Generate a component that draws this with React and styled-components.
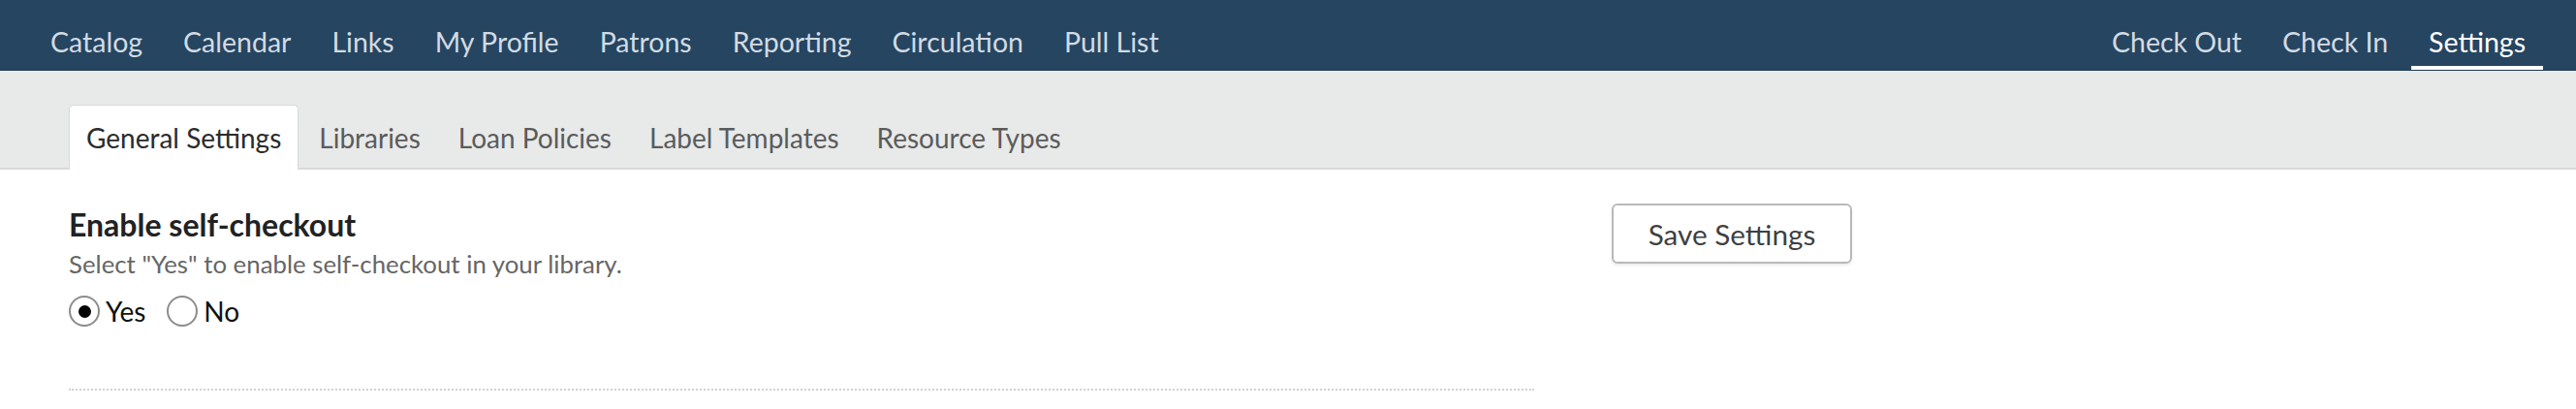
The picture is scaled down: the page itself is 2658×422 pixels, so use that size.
import React, { useState } from "react";
import styled, { createGlobalStyle } from "styled-components";

const GlobalStyle = createGlobalStyle`
	body {
		margin: 0;
		background: #fff;
		font-family: Lato, "Open Sans", sans-serif;
	}
`;

const NavBar = styled.nav`
	display: flex;
	justify-content: space-between;
	height: 72px;
	padding: 0 31px;
	background: #254561;
	border-bottom: 1px solid #1e3a53;
`;

const NavGroup = styled.div`
	display: flex;
`;

const NavItem = styled.a`
	display: flex;
	align-items: center;
	margin: 0 3px;
	padding: 17px 18px 0;
	font-size: 28.5px;
	color: ${(props) => (props.active ? "#fff" : "#d3dbe3")};
	border-bottom: 4px solid ${(props) => (props.active ? "#fff" : "transparent")};
	text-decoration: none;
	white-space: nowrap;
	cursor: pointer;
`;

const TabBar = styled.div`
	display: flex;
	align-items: flex-end;
	height: 100px;
	padding: 0 71px;
	background: #e8e9e9;
	border-bottom: 2px solid #d8dada;
`;

const Tab = styled.div`
	display: flex;
	align-items: center;
	height: 66px;
	margin: 0 3px -2px 0;
	padding: 0 17px;
	font-size: 28px;
	color: ${(props) => (props.active ? "#2b2b2b" : "#5b5b5b")};
	background: ${(props) => (props.active ? "#fff" : "transparent")};
	border: 1px solid ${(props) => (props.active ? "#d8dada" : "transparent")};
	border-bottom: none;
	border-radius: 5px 5px 0 0;
	white-space: nowrap;
	cursor: pointer;
`;

const Content = styled.main`
	display: grid;
	grid-template-columns: 1512px 248px;
	column-gap: 80px;
	align-items: start;
	padding: 38px 71px 0;
`;

const Section = styled.section`
	padding-bottom: 64px;
	border-bottom: 2px dotted #d2d2d2;
`;

const Heading = styled.h2`
	margin: 0;
	font-size: 32px;
	font-weight: 700;
	line-height: 38px;
	color: #222;
`;

const Description = styled.p`
	margin: 6px 0 0;
	font-size: 25.8px;
	line-height: 30px;
	color: #666;
`;

const RadioRow = styled.div`
	display: flex;
	align-items: center;
	gap: 22px;
	margin-top: 18px;
`;

const RadioLabel = styled.label`
	display: flex;
	align-items: center;
	gap: 6px;
	font-size: 28px;
	line-height: 32px;
	color: #111;
	cursor: pointer;
`;

const RadioInput = styled.input`
	appearance: none;
	display: grid;
	place-items: center;
	width: 32px;
	height: 32px;
	margin: 0;
	border: 2px solid #8c8c8c;
	border-radius: 50%;
	background: #fff;

	&:checked::before {
		content: "";
		width: 13px;
		height: 13px;
		border-radius: 50%;
		background: #000;
	}
`;

const SaveButton = styled.button`
	width: 248px;
	height: 62px;
	margin-top: -3px;
	font-family: inherit;
	font-size: 29.7px;
	color: #3f3f3f;
	background: #fff;
	border: 2px solid #b9b9b9;
	border-radius: 6px;
	box-shadow: 0 2px 3px rgba(0, 0, 0, 0.08);
	cursor: pointer;
`;

const leftLinks = ["Catalog", "Calendar", "Links", "My Profile", "Patrons", "Reporting", "Circulation", "Pull List"];
const rightLinks = ["Check Out", "Check In", "Settings"];
const tabs = ["General Settings", "Libraries", "Loan Policies", "Label Templates", "Resource Types"];

export default function App() {
	const [selfCheckout, setSelfCheckout] = useState("yes");

	return (
		<>
			<GlobalStyle />
			<NavBar>
				<NavGroup>
					{leftLinks.map((name) => (
						<NavItem key={name}>{name}</NavItem>
					))}
				</NavGroup>
				<NavGroup>
					{rightLinks.map((name) => (
						<NavItem key={name} active={name === "Settings"}>
							{name}
						</NavItem>
					))}
				</NavGroup>
			</NavBar>
			<TabBar>
				{tabs.map((name, index) => (
					<Tab key={name} active={index === 0}>
						{name}
					</Tab>
				))}
			</TabBar>
			<Content>
				<Section>
					<Heading>Enable self-checkout</Heading>
					<Description>Select "Yes" to enable self-checkout in your library.</Description>
					<RadioRow>
						<RadioLabel>
							<RadioInput
								type="radio"
								name="selfCheckout"
								checked={selfCheckout === "yes"}
								onChange={() => setSelfCheckout("yes")}
							/>
							Yes
						</RadioLabel>
						<RadioLabel>
							<RadioInput
								type="radio"
								name="selfCheckout"
								checked={selfCheckout === "no"}
								onChange={() => setSelfCheckout("no")}
							/>
							No
						</RadioLabel>
					</RadioRow>
				</Section>
				<SaveButton>Save Settings</SaveButton>
			</Content>
		</>
	);
}
